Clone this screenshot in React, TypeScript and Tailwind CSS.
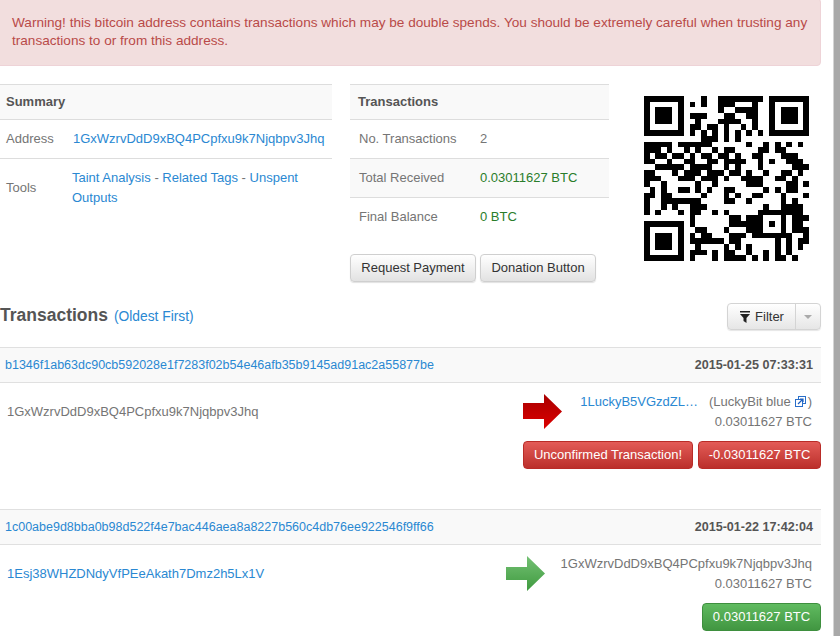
import type { ReactNode } from "react";

const LINK = "text-[#2a88d2]";

const QR_ROWS = [
  "11111110" + "0010011111111" + "01111111",
  "10000010" + "1010011100010" + "01000001",
  "10111010" + "0000010011110" + "01011101",
  "10111010" + "1110001100110" + "01011101",
  "10111010" + "0100011110010" + "01011101",
  "10000010" + "1101101001010" + "01000001",
  "11111110" + "1010101010101" + "01111111",
  "00000000" + "0011101010000" + "00000000",
  "11111011111100" + "000010010101010",
  "11101001010010" + "110000110110000",
  "10110110101101" + "101001100011100",
  "11001001100110" + "111100101001110",
  "00111110111100" + "101000100000111",
  "11000101110111" + "011010010011010",
  "11100011101110" + "100111100110100",
  "10010000010010" + "000011100001101",
  "01010011010100" + "110000010101100",
  "11011000001000" + "101001100010001",
  "10011111110000" + "110010000010100",
  "10010100111000" + "000000010011110",
  "10100010110010" + "100000111111110",
  "00000000100000" + "011011100010111",
  "11111110100000" + "011111101010110",
  "10000010011000" + "100011100010111",
  "10111010101100" + "011101111111001",
  "10111010111111" + "011000000101011",
  "10111010010000" + "101010000101010",
  "10000010111010" + "110010010101000",
  "11111110100010" + "111101010110100",
];

const QR_PATH = QR_ROWS.map((row, y) =>
  row
    .split("")
    .map((cell, x) => (cell === "1" ? `M${x} ${y}h1v1h-1z` : ""))
    .join(""),
).join("");

function QrCode() {
  return (
    <svg width="165" height="165" viewBox="0 0 29 29" aria-label="QR code" shapeRendering="crispEdges">
      <path d={QR_PATH} fill="#000" />
    </svg>
  );
}

function DefaultButton({ children, className = "" }: { children: ReactNode; className?: string }) {
  return (
    <button
      type="button"
      className={`h-[28px] rounded-[4px] border border-[#cfcfcf] bg-gradient-to-b from-white to-[#e2e2e2] text-[13px] text-[#333] shadow-[0_1px_1px_rgba(0,0,0,0.12)] ${className}`}
    >
      {children}
    </button>
  );
}

function AmountButton({
  children,
  color,
  className = "",
}: {
  children: ReactNode;
  color: "red" | "green";
  className?: string;
}) {
  const tone =
    color === "red"
      ? "border-[#b92c28] from-[#e35b57] to-[#bb2f2b]"
      : "border-[#3e8f3e] from-[#60bb60] to-[#419641]";
  return (
    <span
      className={`flex h-[28px] items-center justify-center rounded-[4px] border bg-gradient-to-b text-[13px] text-white ${tone} ${className}`}
    >
      {children}
    </span>
  );
}

function RedArrow() {
  return (
    <svg width="39" height="35" viewBox="0 0 39 35" className="shrink-0">
      <defs>
        <linearGradient id="arrow-red" x1="0" y1="0" x2="0" y2="1">
          <stop offset="0" stopColor="#a80000" />
          <stop offset="1" stopColor="#dc0000" />
        </linearGradient>
      </defs>
      <path d="M0 9H21V0L39 17.5 21 35V25H0Z" fill="url(#arrow-red)" />
    </svg>
  );
}

function GreenArrow() {
  return (
    <svg width="39" height="35" viewBox="0 0 39 35" className="shrink-0">
      <defs>
        <linearGradient id="arrow-green" x1="0" y1="0" x2="0" y2="1">
          <stop offset="0" stopColor="#74c174" />
          <stop offset="1" stopColor="#3f9a3f" />
        </linearGradient>
      </defs>
      <path d="M0 11H21V0L39 17.5 21 35V24H0Z" fill="url(#arrow-green)" />
    </svg>
  );
}

function ExternalIcon() {
  return (
    <svg width="11" height="11" viewBox="0 0 11 11" className="ml-[4px] mr-[2px] inline-block align-[-1px]">
      <rect x="3.5" y="0.5" width="7" height="7" fill="#fff" stroke="#2a6fc9" />
      <rect x="0.5" y="3.5" width="7" height="7" fill="#fff" stroke="#2a6fc9" />
      <path d="M3 8 8 3M5 3h3v3" fill="none" stroke="#1c5fc0" strokeWidth="1.2" />
    </svg>
  );
}

function TxHeader({ hash, time }: { hash: string; time: string }) {
  return (
    <div className="flex h-[36px] items-center justify-between border-y border-[#e0e0e0] bg-[#f9f9f9] pl-[5px] pr-[8px]">
      <a className={`text-[12.5px] ${LINK}`}>{hash}</a>
      <span className="text-[12.6px] font-bold text-[#555]">{time}</span>
    </div>
  );
}

function TableRow({
  label,
  children,
  labelWidth,
  striped = false,
  border = true,
}: {
  label: string;
  children: ReactNode;
  labelWidth: string;
  striped?: boolean;
  border?: boolean;
}) {
  return (
    <div
      className={`flex items-center ${border ? "border-b border-[#dddddd]" : "pb-[2px]"} ${striped ? "bg-[#f9f9f9]" : ""}`}
    >
      <span className={`shrink-0 ${labelWidth}`}>{label}</span>
      <div className="min-w-0 flex-1">{children}</div>
    </div>
  );
}

export default function App() {
  return (
    <div
      className="flex h-[636px] w-[840px] overflow-hidden bg-white text-[13px] leading-[20px] text-[#757575]"
      style={{ fontFamily: '"Liberation Sans", Arial, sans-serif' }}
    >
      <div className="w-[821px] shrink-0">
        <div className="-mt-[2px] -ml-[4px] h-[68px] rounded-[4px] border border-[#eed3d7] bg-[#f2dede] pt-[15px] pl-[15px] pr-[8px] text-[13.6px] leading-[18px] text-[#b94a48]">
          Warning! this bitcoin address contains transactions which may be double spends. You should be extremely careful when trusting any transactions to or from this address.
        </div>

        <div className="mt-[18px] flex">
          <div className="w-[332px] shrink-0">
            <div className="flex h-[36px] items-center border-y border-[#dddddd] bg-[#f9f9f9] pl-[6px] font-bold text-[#555]">
              Summary
            </div>
            <div className="pl-[6px]">
              <TableRow label="Address" labelWidth="w-[67px]">
                <div className="flex h-[38px] items-center">
                  <a className={LINK}>1GxWzrvDdD9xBQ4PCpfxu9k7Njqbpv3Jhq</a>
                </div>
              </TableRow>
            </div>
            <div className="-mt-px border-t border-[#dddddd] pl-[6px]">
              <TableRow label="Tools" labelWidth="w-[66px]" border={false}>
                <div className="w-[250px] py-[9px]">
                  <a className={LINK}>Taint Analysis</a> - <a className={LINK}>Related Tags</a> -{" "}
                  <a className={LINK}>Unspent Outputs</a>
                </div>
              </TableRow>
            </div>
          </div>

          <div className="ml-[18px] w-[259px] shrink-0">
            <div className="flex h-[36px] items-center border-y border-[#dddddd] bg-[#f9f9f9] pl-[8px] font-bold text-[#555]">
              Transactions
            </div>
            <div className="[&>div]:h-[39px] [&>div]:pl-[9px]">
              <TableRow label="No. Transactions" labelWidth="w-[121px]">
                2
              </TableRow>
              <TableRow label="Total Received" labelWidth="w-[121px]" striped>
                <span className="text-[#2a7d2a]">0.03011627 BTC</span>
              </TableRow>
              <TableRow label="Final Balance" labelWidth="w-[121px]" border={false}>
                <span className="text-[#2a7d2a]">0 BTC</span>
              </TableRow>
            </div>
            <div className="mt-[17px] flex gap-[4px]">
              <DefaultButton className="w-[126px]">Request Payment</DefaultButton>
              <DefaultButton className="w-[116px]">Donation Button</DefaultButton>
            </div>
          </div>

          <div className="ml-[35px] pt-[12px]">
            <QrCode />
          </div>
        </div>

        <div className="mt-[21px] flex h-[27px] items-center justify-between">
          <div className="-mt-[2px] flex items-baseline gap-[6px]">
            <h2 className="text-[17.5px] font-bold text-[#555]">Transactions</h2>
            <a className={`text-[13.8px] ${LINK}`}>(Oldest First)</a>
          </div>
          <div className="flex h-[27px] w-[94px] rounded-[4px] border border-[#d4d4d4] bg-gradient-to-b from-white to-[#e6e6e6] shadow-[0_1px_1px_rgba(0,0,0,0.1)]">
            <div className="flex w-[68px] items-center justify-center gap-[4px] border-r border-[#d4d4d4] text-[#333]">
              <svg width="12" height="12" viewBox="0 0 12 12">
                <path d="M1 0h10v1.5H1ZM1 3h10L7.5 7v5l-3-2V7Z" fill="#222" />
              </svg>
              Filter
            </div>
            <div className="flex flex-1 items-center justify-center">
              <span className="h-0 w-0 border-x-[4px] border-t-[4px] border-x-transparent border-t-[#aaa]" />
            </div>
          </div>
        </div>

        <div className="mt-[17px]">
          <TxHeader
            hash="b1346f1ab63dc90cb592028e1f7283f02b54e46afb35b9145ad91ac2a55877be"
            time="2015-01-25 07:33:31"
          />
          <div className="h-[126px]">
            <div className="flex pl-[7px] pr-[9px] pt-[9px]">
              <span className="mt-[10px] flex-1">1GxWzrvDdD9xBQ4PCpfxu9k7Njqbpv3Jhq</span>
              <div className="mr-[19px] mt-[2px]">
                <RedArrow />
              </div>
              <div className="w-[231px] text-right">
                <div className="flex justify-end whitespace-nowrap">
                  <a className={`mr-[11px] ${LINK}`}>1LuckyB5VGzdZL…</a>
                  <span>
                    (LuckyBit blue
                    <ExternalIcon />)
                  </span>
                </div>
                <div>0.03011627 BTC</div>
              </div>
            </div>
            <div className="mt-[9px] flex justify-end gap-[5px]">
              <AmountButton color="red" className="w-[170px]">
                Unconfirmed Transaction!
              </AmountButton>
              <AmountButton color="red" className="w-[123px]">
                -0.03011627 BTC
              </AmountButton>
            </div>
          </div>

          <TxHeader
            hash="1c00abe9d8bba0b98d522f4e7bac446aea8a8227b560c4db76ee922546f9ff66"
            time="2015-01-22 17:42:04"
          />
          <div className="flex pl-[7px] pr-[9px] pt-[9px]">
            <a className={`mt-[10px] flex-1 ${LINK}`}>1Esj38WHZDNdyVfPEeAkath7Dmz2h5Lx1V</a>
            <div className="mr-[16px] mt-[2px]">
              <GreenArrow />
            </div>
            <div className="text-right">
              <div>1GxWzrvDdD9xBQ4PCpfxu9k7Njqbpv3Jhq</div>
              <div>0.03011627 BTC</div>
            </div>
          </div>
          <div className="mt-[9px] flex justify-end">
            <AmountButton color="green" className="w-[119px]">
              0.03011627 BTC
            </AmountButton>
          </div>
        </div>
      </div>

      <div className="ml-[12px] w-[7px] shrink-0 border-l border-[#d4d4d4] bg-[#a9a9a9]" />
    </div>
  );
}
